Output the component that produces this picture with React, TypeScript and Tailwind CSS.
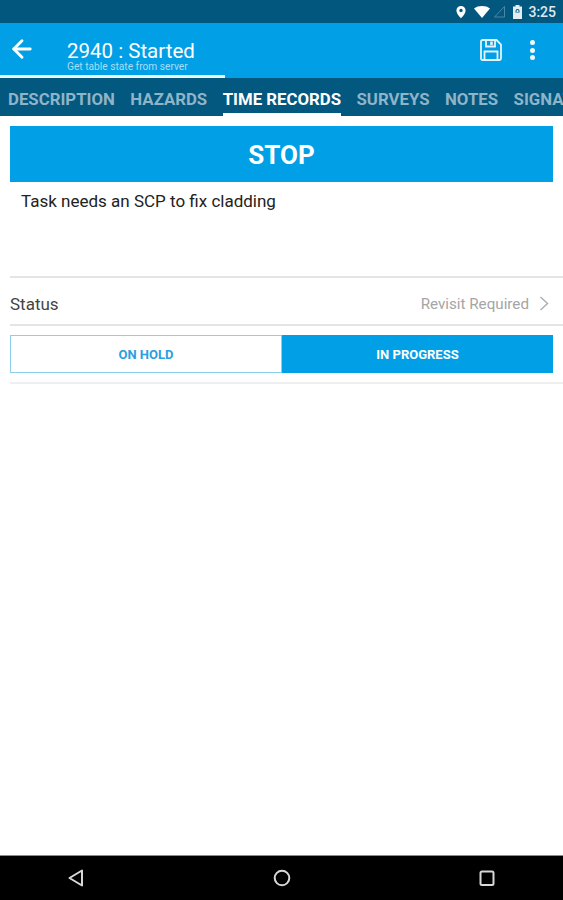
import { ArrowLeft } from 'lucide-react';

const tabs = [
  { label: 'DESCRIPTION', active: false },
  { label: 'HAZARDS', active: false },
  { label: 'TIME RECORDS', active: true },
  { label: 'SURVEYS', active: false },
  { label: 'NOTES', active: false },
  { label: 'SIGNATURE', active: false },
];

function StatusBar() {
  return (
    <div className="h-[23px] bg-[#02577f] flex items-center justify-end pr-[7px] text-white">
      <svg width="12" height="14" viewBox="0 0 12 14" className="mr-[7px]">
        <path fillRule="evenodd" fill="#fff" d="M6 1a4.6 4.6 0 0 0-4.6 4.6C1.400 9 6 13.400 6 13.400S10.600 9 10.600 5.600A4.600 4.600 0 0 0 6 1zm0 6.200a1.700 1.700 0 1 1 0-3.400 1.700 1.700 0 0 1 0 3.400z" />
      </svg>
      <svg width="16" height="12" viewBox="0 0 16 12" className="mr-[3px]">
        <path fill="#fff" d="M0 2.500C2 .8 5 0 8 0s6 .8 8 2.500L8 12z" />
      </svg>
      <svg width="13" height="13" viewBox="0 0 13 13" className="mr-[6px]">
        <path fill="none" stroke="#4d87a5" strokeWidth="1" d="M1.500 12h10V1.500z" />
      </svg>
      <svg width="11" height="14" viewBox="0 0 11 14" className="mr-[5px]">
        <path fill="#e4edf2" d="M3.500 0h4v1.500H10V14H1V1.500h2.500z" />
        <path fill="#02577f" d="M3.500 7.500V6a2 2 0 0 1 4 0v1.500H3.500zM4.500 7h2V6a1 1 0 0 0-2 0z" />
      </svg>
      <span className="font-['Roboto',sans-serif] text-[14px] leading-none font-medium text-[#dfe9ef] mt-[1px]">3:25</span>
    </div>
  );
}

function AppBar() {
  return (
    <div className="relative h-[55px] bg-[#019fe5] flex items-start text-white">
      <ArrowLeft className="w-[28px] h-[28px] ml-[8px] mt-[12px]" strokeWidth={2.500} />
      <div className="ml-[31px] mt-[17px] font-['Roboto',sans-serif]">
        <div className="text-[20.500px] leading-[22px]">2940 : Started</div>
        <div className="text-[10.200px] leading-[9px] text-[#a9ddf6]">Get table state from server</div>
      </div>
      <div className="ml-auto mr-[28px] mt-[16px] flex items-center gap-[28px]">
        <svg width="22" height="22" viewBox="0 0 22 22" fill="none" stroke="#e3f4fc" strokeWidth="1.800">
          <path d="M2.500 1h14L21 5.500V19.500a1.500 1.500 0 0 1-1.500 1.500h-17A1.500 1.500 0 0 1 1 19.500v-17A1.500 1.500 0 0 1 2.500 1z" />
          <path d="M6 1v6.500h9V1" />
          <path d="M4.500 21v-8.500h13V21" />
          <path d="M11.500 2.500v3.500" strokeWidth="2.500" />
        </svg>
        <div className="flex flex-col gap-[2.500px]">
          <span className="w-[5px] h-[5px] rounded-full bg-[#eef8fd]" />
          <span className="w-[5px] h-[5px] rounded-full bg-[#eef8fd]" />
          <span className="w-[5px] h-[5px] rounded-full bg-[#eef8fd]" />
        </div>
      </div>
      {/* progress line under the title */}
      <div className="absolute left-0 bottom-0 w-[225px] h-[3px] bg-[#e8f6fd]" />
    </div>
  );
}

function TabBar() {
  return (
    <div className="h-[38px] bg-[#02587f] flex gap-[15.500px] pl-[8px] overflow-hidden font-['Roboto',sans-serif] shrink-0">
      {tabs.map((tab) => (
        <div
          key={tab.label}
          className={`h-full flex items-center shrink-0 text-[16.800px] font-bold leading-none border-b-[3px] pt-[8px] ${
            tab.active ? 'text-white border-white' : 'text-[#8fb4c8] border-transparent'
          }`}
        >
          {tab.label}
        </div>
      ))}
    </div>
  );
}

function NavBar() {
  return (
    <div className="mt-auto h-[45px] bg-black flex items-center justify-center gap-[188px] border-t border-t-[#8a8a8a]">
      <svg width="18" height="20" viewBox="0 0 18 20" className="-ml-[2px]">
        <path d="M15 2.500v15L2.500 10z" fill="none" stroke="#d8d8d8" strokeWidth="2" strokeLinejoin="round" />
      </svg>
      <svg width="18" height="18" viewBox="0 0 18 18">
        <circle cx="9" cy="9" r="7.300" fill="none" stroke="#d8d8d8" strokeWidth="2" />
      </svg>
      <svg width="16" height="18" viewBox="0 0 16 18">
        <rect x="1.500" y="2.500" width="13" height="13.500" rx="1.500" fill="none" stroke="#d8d8d8" strokeWidth="2" />
      </svg>
    </div>
  );
}

export default function App() {
  return (
    <div className="w-[563px] h-[900px] flex flex-col bg-white overflow-hidden font-['Roboto',sans-serif]">
      <StatusBar />
      <AppBar />
      <TabBar />

      <div className="pl-[10px] pt-[10px]">
        <div className="w-[543px] h-[56px] bg-[#019fe5] flex items-center justify-center text-white text-[26px] font-bold pt-[3px]">
          STOP
        </div>
        <div className="h-[96px] border-b-2 border-[#e4e4e4] pl-[11px] pt-[10px] text-[17px] leading-[19px] text-[#222]">
          Task needs an SCP to fix cladding
        </div>
        <div className="h-[48px] border-b-2 border-[#e4e4e4] flex items-center justify-between pr-[14px] pt-[7px] text-[17px]">
          <span className="text-[#444]">Status</span>
          <span className="flex items-center gap-[10px] text-[15.200px] text-[#a5a5a5]">
            Revisit Required
            <svg width="10" height="15" viewBox="0 0 10 15" fill="none" stroke="#b0b0b0" strokeWidth="1.500" className="-mt-[2px]">
              <path d="M1.500 1l7 6.500-7 6.500" />
            </svg>
          </span>
        </div>
        <div className="h-[58px] border-b-2 border-[#efefef] pt-[9px]">
          <div className="w-[543px] h-[38px] flex text-[13px] font-bold">
            <div className="w-[272px] flex items-center justify-center border border-[#8ccdf0] text-[#2a9fe0] pt-[1px]">
              ON HOLD
            </div>
            <div className="w-[271px] flex items-center justify-center bg-[#019fe5] text-white pt-[1px]">
              IN PROGRESS
            </div>
          </div>
        </div>
      </div>

      <NavBar />
    </div>
  );
}
